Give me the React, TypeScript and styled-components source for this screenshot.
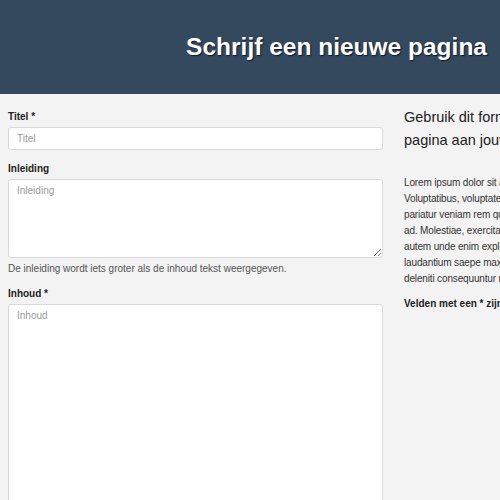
import React from "react";
import styled, { createGlobalStyle } from "styled-components";

const Global = createGlobalStyle`
  html, body { margin: 0; padding: 0; overflow: hidden; }
  body {
    background: #f3f3f3;
    font-family: "Liberation Sans", Arial, Helvetica, sans-serif;
    color: #333;
    width: 500px;
  }
`;

const Header = styled.header`
  height: 94px;
  background: #34495e;
  display: flex;
  align-items: center;
  justify-content: flex-end;
  padding-right: 13px;
  box-sizing: border-box;
`;

const Title = styled.h1`
  margin: 0;
  font-size: 24.5px;
  font-weight: bold;
  color: #fff;
  text-shadow: 1px 1px 1px #0d1a2a;
  white-space: nowrap;
`;

const Main = styled.main`
  display: flex;
  gap: 21px;
  padding: 12px 0 0 8px;
  width: 800px;
`;

const FormCol = styled.form`
  width: 375px;
  flex: none;
  display: flex;
  flex-direction: column;
  padding-top: 4px;
`;

const Field = styled.div`
  display: flex;
  flex-direction: column;
  margin-bottom: 12px;
`;

const Label = styled.label`
  font-size: 10px;
  font-weight: bold;
  color: #222;
  line-height: 13px;
  margin-bottom: 4px;
`;

const inputBase = `
  box-sizing: border-box;
  width: 100%;
  border: 1px solid #d9d9d9;
  border-radius: 3px;
  background: #fff;
  font-family: "Liberation Sans", Arial, sans-serif;
  font-size: 10px;
  color: #333;
  padding: 5px 8px;
  outline: none;
  &::placeholder { color: #9a9a9a; }
`;

const Input = styled.input`
  ${inputBase}
  height: 23px;
`;

const TextArea = styled.textarea<{ $h: number }>`
  ${inputBase}
  height: ${(p) => p.$h}px;
  padding-top: 5px;
  resize: vertical;
`;

const Help = styled.p`
  margin: 4px 0 0;
  font-size: 10px;
  color: #555;
  line-height: 13px;
`;

const InfoCol = styled.aside`
  width: 380px;
  flex: none;
`;

const InfoTitle = styled.h2`
  margin: 0 0 23px;
  font-size: 14.5px;
  font-weight: normal;
  color: #222;
  line-height: 23px;
  white-space: nowrap;
`;

const InfoText = styled.p`
  margin: 0 0 9px;
  font-size: 10px;
  letter-spacing: -0.15px;
  line-height: 16px;
  color: #333;
  white-space: nowrap;
`;

const Strong = styled.p`
  margin: 0;
  font-size: 10px;
  font-weight: bold;
  color: #222;
  line-height: 16px;
  white-space: nowrap;
`;

export default function App() {
  return (
    <>
      <Global />
      <Header>
        <Title>Schrijf een nieuwe pagina</Title>
      </Header>
      <Main>
        <FormCol>
          <Field>
            <Label>Titel *</Label>
            <Input placeholder="Titel" />
          </Field>
          <Field>
            <Label>Inleiding</Label>
            <TextArea $h={79} placeholder="Inleiding" />
            <Help>De inleiding wordt iets groter als de inhoud tekst weergegeven.</Help>
          </Field>
          <Field>
            <Label>Inhoud *</Label>
            <TextArea $h={260} placeholder="Inhoud" />
          </Field>
        </FormCol>
        <InfoCol>
          <InfoTitle>
            Gebruik dit formulier om een nieuwe
            <br />
            pagina aan jouw website toe te voegen.
          </InfoTitle>
          <InfoText>
            Lorem ipsum dolor sit amet, consectetur adipisicing elit.
            <br />
            Voluptatibus, voluptatem, quisquam. Accusamus,
            <br />
            pariatur veniam rem quo aliquid ipsa dolorem
            <br />
            ad. Molestiae, exercitationem, officia dolorum
            <br />
            autem unde enim explicabo eius doloremque
            <br />
            laudantium saepe maxime modi cumque
            <br />
            deleniti consequuntur nostrum.
          </InfoText>
          <Strong>Velden met een * zijn verplicht.</Strong>
        </InfoCol>
      </Main>
    </>
  );
}
